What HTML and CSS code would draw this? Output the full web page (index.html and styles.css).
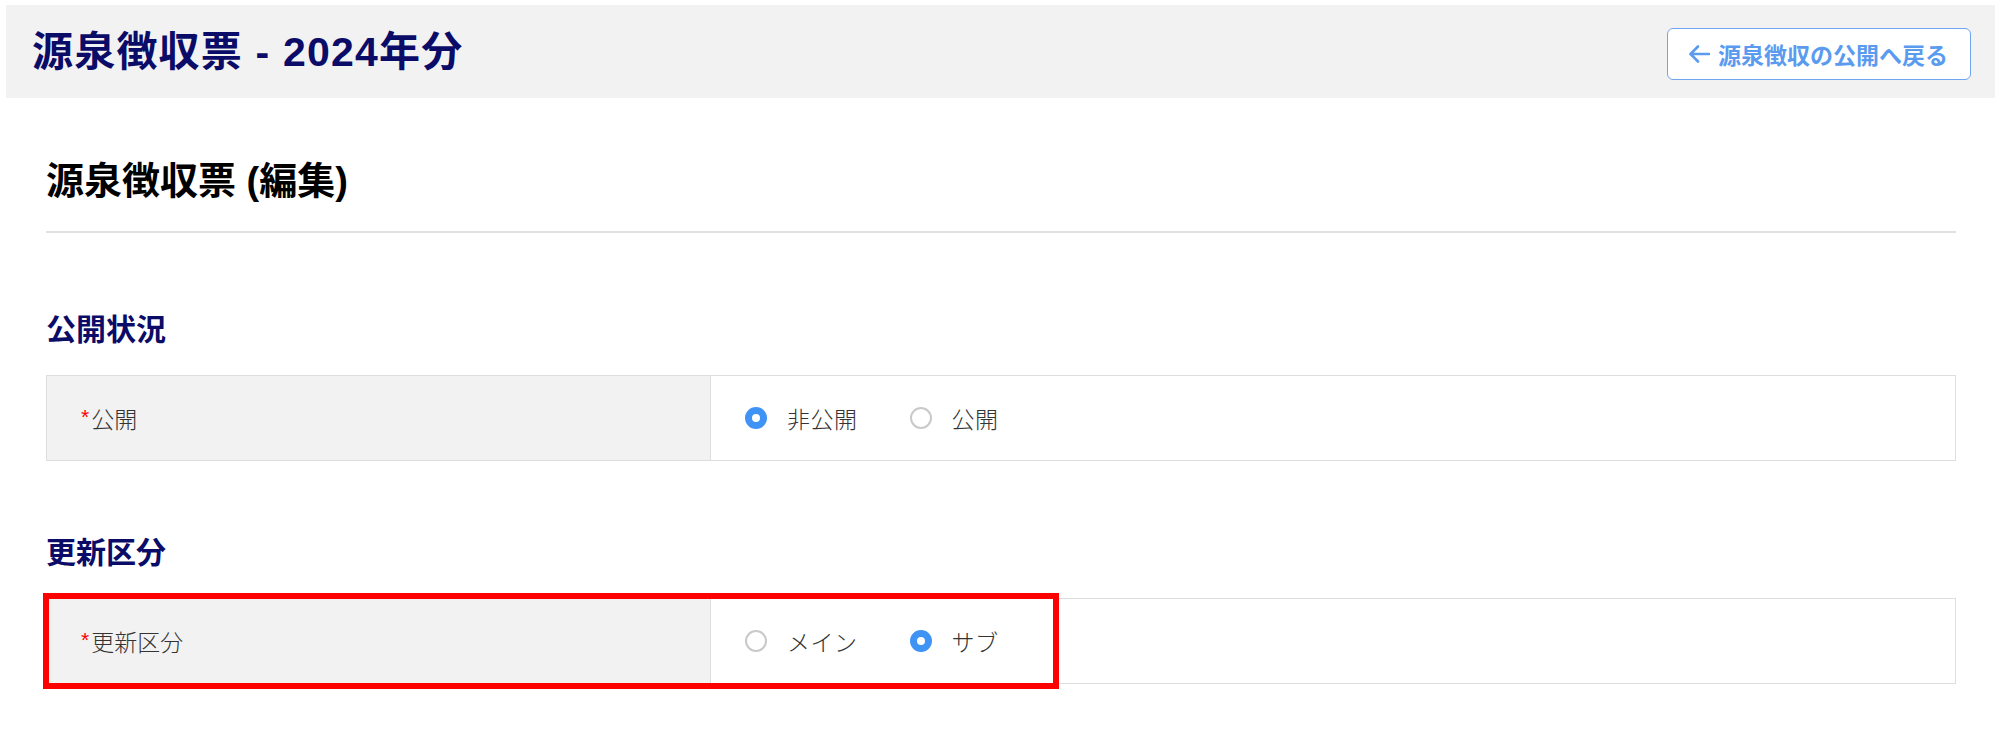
FILE: index.html
```html
<!DOCTYPE html>
<html lang="ja">
  <head>
    <meta charset="UTF-8" />
    <meta name="viewport" content="width=device-width, initial-scale=1.0" />
    <title>源泉徴収票 - 2024年分</title>
    <link rel="stylesheet" href="styles.css">
  </head>
  <body>
    <div id="pageHeader">
      <h1>源泉徴収票 - 2024年分</h1>
      <a class="back-button" href="#">
        <svg class="back-arrow" width="22" height="20" viewBox="0 0 22 20" aria-hidden="true">
          <path d="M21 10H3M10 2.5L2.5 10L10 17.5" fill="none" stroke="currentColor" stroke-width="2.6" stroke-linecap="round" stroke-linejoin="round" />
        </svg>
        <span>源泉徴収の公開へ戻る</span>
      </a>
    </div>

    <div id="content">
      <h2 class="page-title">源泉徴収票 (編集)</h2>

      <div class="section">
        <h3>公開状況</h3>
        <div class="form-table">
          <div class="form-label"><span class="required">*</span>公開</div>
          <div class="form-field">
            <label class="radio"><span class="radio-mark checked"></span>非公開</label>
            <label class="radio"><span class="radio-mark"></span>公開</label>
          </div>
        </div>
      </div>

      <div class="section second">
        <h3>更新区分</h3>
        <div class="highlight-wrap">
          <div class="form-table">
            <div class="form-label"><span class="required">*</span>更新区分</div>
            <div class="form-field">
              <label class="radio"><span class="radio-mark"></span>メイン</label>
              <label class="radio"><span class="radio-mark checked"></span>サブ</label>
            </div>
          </div>
          <!-- annotation box drawn over the row -->
          <div class="highlight-box"></div>
        </div>
      </div>
    </div>
  </body>
</html>
```

FILE: styles.css
```css
body {
  margin: 5px 5px 0 6px;
  background-color: #fff;
  font-family: "Liberation Sans", "Noto Sans CJK JP", sans-serif;
  color: #333;
}

#pageHeader {
  display: flex;
  justify-content: space-between;
  align-items: center;
  height: 93px;
  padding: 0 24px 0 26px;
  box-sizing: border-box;
  background-color: #f2f2f2;
}

#pageHeader h1 {
  margin: 0;
  font-size: 41px;
  line-height: 40px;
  font-weight: bold;
  letter-spacing: 1.2px;
  color: #0b0b68;
}

.back-button {
  display: flex;
  align-items: center;
  gap: 8px;
  height: 52px;
  margin-top: 5px;
  padding: 0 22px 0 20px;
  box-sizing: border-box;
  border: 1px solid #6fa5f1;
  border-radius: 6px;
  background-color: #fff;
  color: #5b9bef;
  font-size: 23px;
  font-weight: bold;
  text-decoration: none;
}

.back-arrow {
  display: block;
}

#content {
  padding: 0 39px 40px 40px;
}

.page-title {
  margin: 58px 0 0 0;
  padding-bottom: 25px;
  border-bottom: 2px solid #e1e1e1;
  font-size: 38px;
  line-height: 50px;
  font-weight: bold;
  color: #000;
}

.section {
  margin-top: 77px;
}

.section.second {
  margin-top: 72px;
}

.section h3 {
  margin: 0 0 25px 0;
  font-size: 30px;
  line-height: 40px;
  font-weight: bold;
  color: #0b0b68;
}

.form-table {
  display: grid;
  grid-template-columns: 664px 1fr;
  height: 86px;
  box-sizing: border-box;
  border: 1px solid #dedede;
}

.form-label {
  display: flex;
  align-items: center;
  padding-left: 34px;
  background-color: #f2f2f2;
  border-right: 1px solid #dedede;
  font-family: "Noto Sans CJK JP", sans-serif;
  font-size: 23px;
  font-weight: 300;
  color: #333;
}

.required {
  color: #f00;
  font-family: "Liberation Sans", sans-serif;
  font-size: 21px;
  line-height: 21px;
  margin-right: 2px;
  align-self: flex-start;
  margin-top: 30px;
}

.form-field {
  display: flex;
  align-items: center;
  padding-left: 34px;
  background-color: #fff;
}

.radio {
  display: flex;
  align-items: center;
  margin-right: 52px;
  font-family: "Noto Sans CJK JP", sans-serif;
  font-size: 23px;
  font-weight: 300;
  letter-spacing: 0.5px;
  color: #333;
}

.radio-mark {
  width: 22px;
  height: 22px;
  margin-right: 20px;
  box-sizing: border-box;
  border: 2px solid #c9c9c9;
  border-radius: 50%;
  background-color: #fff;
}

.radio-mark.checked {
  border: 7px solid #3f93f5;
  background-color: #fff;
}

.highlight-wrap {
  position: relative;
}

.highlight-box {
  position: absolute;
  top: -5px;
  left: -3px;
  width: 1016px;
  height: 96px;
  box-sizing: border-box;
  border: 6px solid #f00;
}
```
